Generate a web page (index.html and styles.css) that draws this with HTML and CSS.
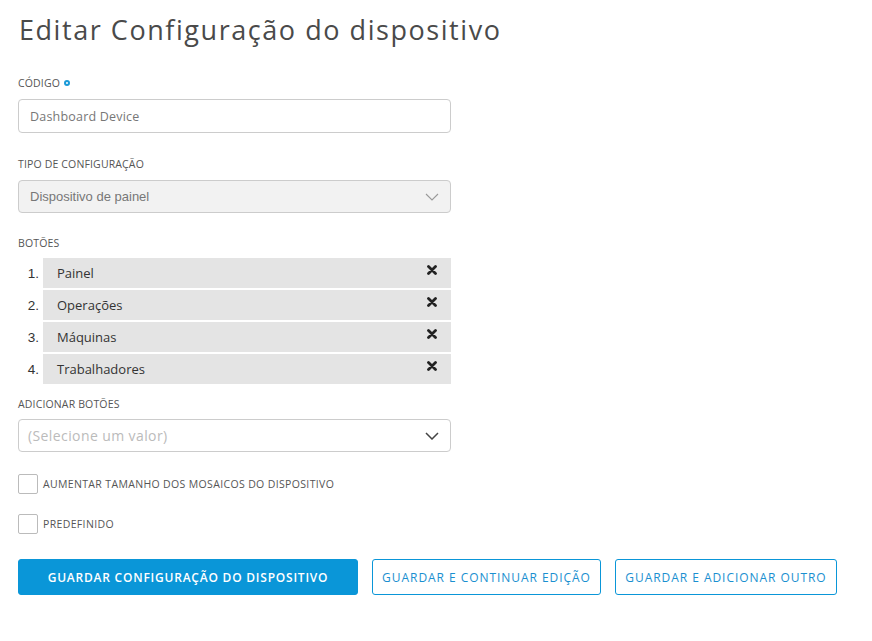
FILE: index.html
```html
<!DOCTYPE html>
<html lang="pt">
<head>
<meta charset="utf-8">
<title>Editar Configuração do dispositivo</title>
<link rel="stylesheet" href="styles.css">
</head>
<body>
<div class="page">
  <h1 class="title">Editar Configuração do dispositivo</h1>

  <div class="field">
    <label class="label">Código <span class="req"></span></label>
    <div class="input"><span class="placeholder">Dashboard Device</span></div>
  </div>

  <div class="field">
    <label class="label">Tipo de configuração</label>
    <div class="select disabled">
      <span class="select-text">Dispositivo de painel</span>
      <svg class="chev" width="14" height="8" viewBox="0 0 14 8"><path d="M1 1l6 6 6-6" fill="none" stroke="#999" stroke-width="1.1"/></svg>
    </div>
  </div>

  <div class="field list-field">
    <label class="label">Botões</label>
    <ol class="list">
      <li class="item"><span class="num">1.</span><span class="item-box"><span>Painel</span><svg class="x" width="10" height="10" viewBox="0 0 10 10"><path d="M1.5 1.5l7 7M8.5 1.5l-7 7" stroke="#222" stroke-width="2.8" stroke-linecap="round"/></svg></span></li>
      <li class="item"><span class="num">2.</span><span class="item-box"><span>Operações</span><svg class="x" width="10" height="10" viewBox="0 0 10 10"><path d="M1.5 1.5l7 7M8.5 1.5l-7 7" stroke="#222" stroke-width="2.8" stroke-linecap="round"/></svg></span></li>
      <li class="item"><span class="num">3.</span><span class="item-box"><span>Máquinas</span><svg class="x" width="10" height="10" viewBox="0 0 10 10"><path d="M1.5 1.5l7 7M8.5 1.5l-7 7" stroke="#222" stroke-width="2.8" stroke-linecap="round"/></svg></span></li>
      <li class="item"><span class="num">4.</span><span class="item-box"><span>Trabalhadores</span><svg class="x" width="10" height="10" viewBox="0 0 10 10"><path d="M1.5 1.5l7 7M8.5 1.5l-7 7" stroke="#222" stroke-width="2.8" stroke-linecap="round"/></svg></span></li>
    </ol>
  </div>

  <div class="field tight">
    <label class="label">Adicionar botões</label>
    <div class="select">
      <span class="select-ph">(Selecione um valor)</span>
      <svg class="chev" width="14" height="8" viewBox="0 0 14 8"><path d="M1 1l6 6 6-6" fill="none" stroke="#444" stroke-width="1.5"/></svg>
    </div>
  </div>

  <label class="check"><span class="box"></span><span class="check-label">Aumentar tamanho dos mosaicos do dispositivo</span></label>
  <label class="check"><span class="box"></span><span class="check-label">Predefinido</span></label>

  <div class="actions">
    <button class="btn primary">Guardar configuração do dispositivo</button>
    <button class="btn outline w1">Guardar e continuar edição</button>
    <button class="btn outline w2">Guardar e adicionar outro</button>
  </div>
</div>
</body>
</html>
```

FILE: styles.css
```css
* { box-sizing: border-box; }
html, body { margin: 0; padding: 0; background: #fff; }
body { font-family: "Open Sans", "Noto Sans", sans-serif; color: #444; }

.page { padding: 11px 18px; width: 872px; }

.title {
  margin: 0 0 0 1px;
  font-weight: 400;
  font-size: 27px;
  line-height: 38px;
  letter-spacing: 1.55px;
  color: #4a4a4a;
}

.field { margin-top: 27px; }
.field + .field { margin-top: 24px; }
.field.list-field { margin-top: 23px; }
.field.tight { margin-top: 13px; }

.label {
  display: flex;
  align-items: center;
  gap: 4px;
  font-size: 10.5px;
  line-height: 14px;
  text-transform: uppercase;
  color: #555;
  margin-bottom: 9px;
  letter-spacing: 0.15px;
}
.list-field .label { margin-bottom: 8px; }
.tight .label { margin-bottom: 8px; }
.req {
  width: 6px; height: 6px;
  border: 2px solid #1a9ad8;
  border-radius: 50%;
  display: inline-block;
}

.input, .select {
  width: 433px;
  height: 34px;
  border: 1px solid #ccc;
  border-radius: 4px;
  display: flex;
  align-items: center;
  padding: 0 11px;
  background: #fff;
}
.select { height: 33px; }
.placeholder { font-size: 12.5px; color: #777; letter-spacing: 0.2px; }

.select { justify-content: space-between; padding-right: 11px; }
.select.disabled { background: #f2f2f2; }
.select-text { font-family: "Liberation Sans", Arial, sans-serif; font-size: 13px; color: #777; }
.select-ph { font-size: 14px; color: #bbb; letter-spacing: 0.4px; margin-left: -2px; }

.list { list-style: none; margin: 0; padding: 0; display: flex; flex-direction: column; gap: 2px; }
.item { display: flex; align-items: center; height: 30px; }
.num {
  width: 25px;
  padding-right: 4px;
  text-align: right;
  font-family: "Liberation Sans", Arial, sans-serif;
  font-size: 13.5px;
  color: #333;
}
.item-box {
  flex: 0 0 408px;
  height: 30px;
  background: #e4e4e4;
  display: flex;
  align-items: center;
  justify-content: space-between;
  padding: 0 14px 0 14px;
  font-size: 13px;
  color: #333;
}
.x { margin-top: -6px; }

.check { display: flex; align-items: center; gap: 5px; margin-top: 22px; }
.check + .check { margin-top: 20px; }
.box { width: 20px; height: 20px; border: 1px solid #bbb; border-radius: 2px; background: #fff; }
.check-label { font-size: 10.5px; text-transform: uppercase; color: #555; letter-spacing: 0.35px; }

.actions { display: flex; gap: 14px; margin-top: 25px; }
.btn {
  height: 36px;
  border-radius: 3px;
  font-family: "Open Sans", "Noto Sans", sans-serif;
  font-size: 12px;
  text-transform: uppercase;
  cursor: pointer;
  padding: 0;
}
.btn.primary {
  width: 340px;
  background: #0a96d8;
  border: 1px solid #0a96d8;
  color: #fff;
  font-weight: 600;
  letter-spacing: 0.78px;
}
.btn.outline {
  background: #fff;
  border: 1px solid #0a96d8;
  color: #1a8fd0;
  letter-spacing: 0.95px;
}
.btn.w1 { width: 229px; }
.btn.w2 { width: 222px; }
```
